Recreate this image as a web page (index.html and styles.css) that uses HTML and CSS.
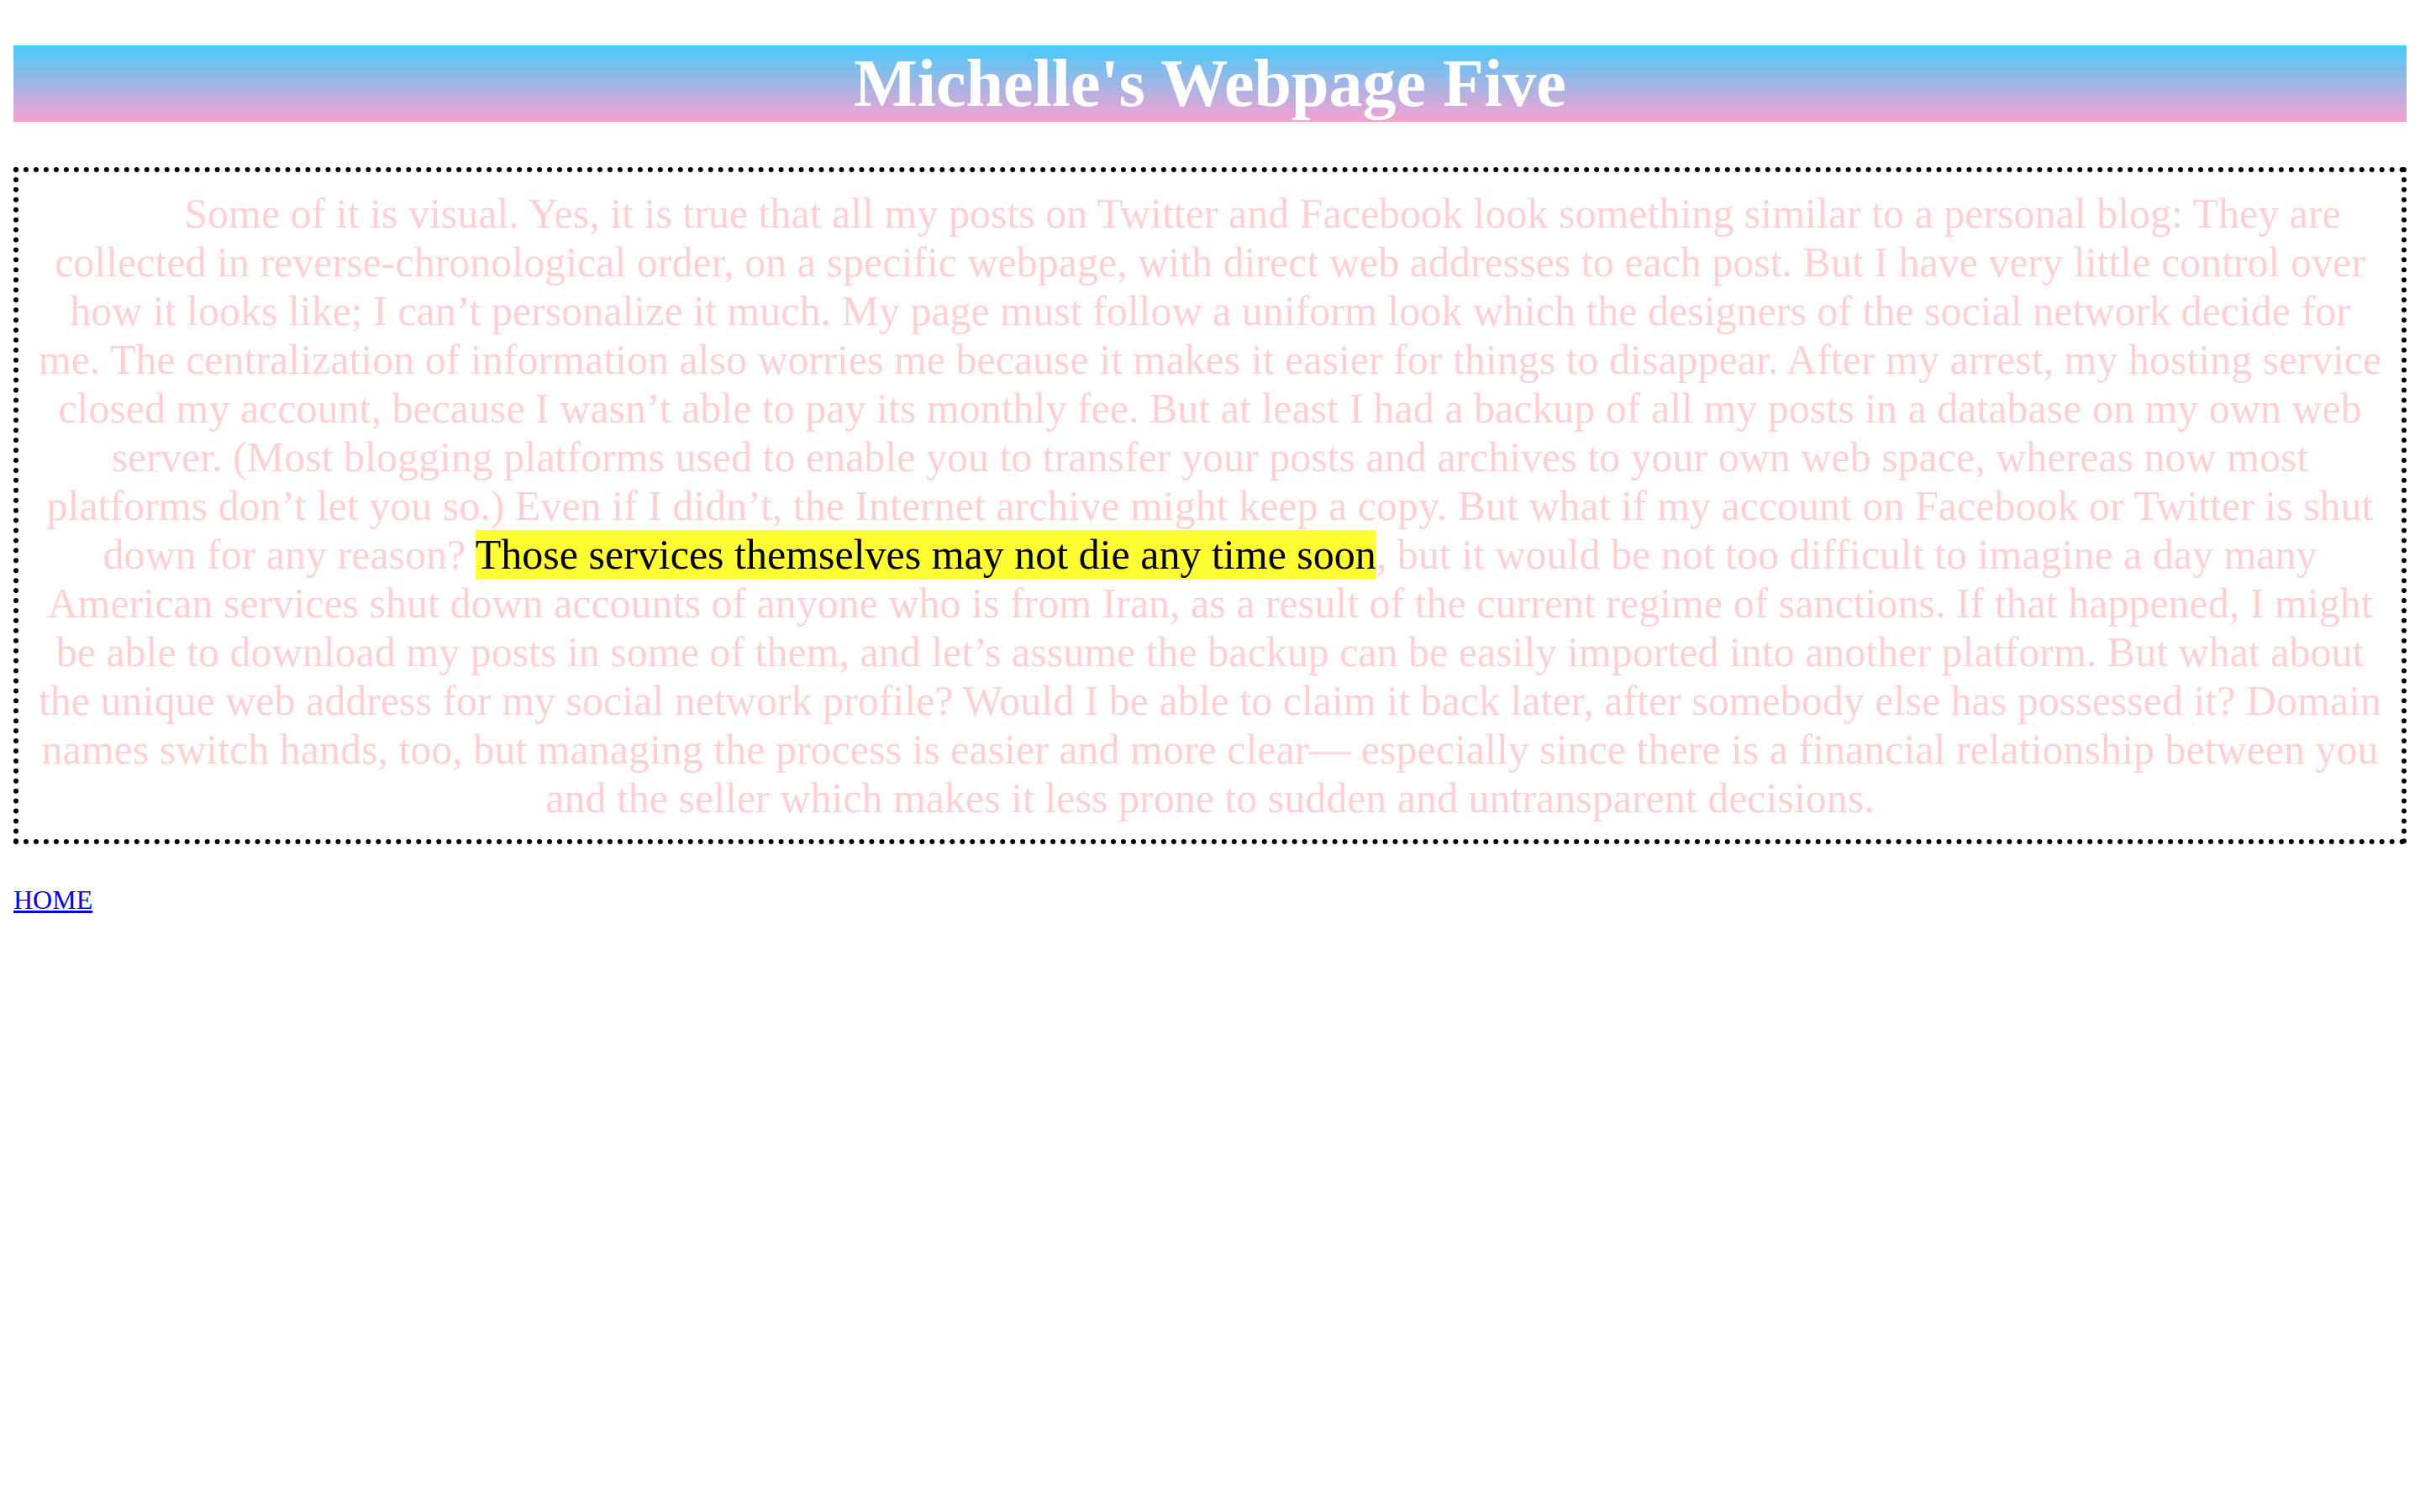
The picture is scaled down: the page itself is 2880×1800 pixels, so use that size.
FILE: index.html
```html
<!DOCTYPE html>
<html>
<head>
<meta charset="utf-8">
<title>Michelle's Webpage Five</title>
<link rel="stylesheet" href="styles.css">
</head>
<body>
<h1 class="title">Michelle's Webpage Five</h1>
<div class="box">
<p class="story">Some of it is visual. Yes, it is true that all my posts on Twitter and Facebook look something similar to a personal blog: They are collected in reverse-chronological order, on a specific webpage, with direct web addresses to each post. But I have very little control over how it looks like; I can’t personalize it much. My page must follow a uniform look which the designers of the social network decide for me. The centralization of information also worries me because it makes it easier for things to disappear. After my arrest, my hosting service closed my account, because I wasn’t able to pay its monthly fee. But at least I had a backup of all my posts in a database on my own web server. (Most blogging platforms used to enable you to transfer your posts and archives to your own web space, whereas now most platforms don’t let you so.) Even if I didn’t, the Internet archive might keep a copy. But what if my account on Facebook or Twitter is shut down for any reason? <span class="mark">Those services themselves may not die any time soon</span>, but it would be not too difficult to imagine a day many American services shut down accounts of anyone who is from Iran, as a result of the current regime of sanctions. If that happened, I might be able to download my posts in some of them, and let’s assume the backup can be easily imported into another platform. But what about the unique web address for my social network profile? Would I be able to claim it back later, after somebody else has possessed it? Domain names switch hands, too, but managing the process is easier and more clear— especially since there is a financial relationship between you and the seller which makes it less prone to sudden and untransparent decisions.</p>
</div>
<p class="nav"><a href="#">HOME</a></p>
</body>
</html>
```
FILE: styles.css
```css
html, body {
  background: #ffffff;
}
body {
  margin: 0;
  padding: 54px 16px 0;
  font-family: "Liberation Serif", "Times New Roman", serif;
  font-size: 32px;
}
.title {
  margin: 0 0 54px;
  background: linear-gradient(to bottom, #47cbfc, #f8a0cf);
  color: #ffffff;
  font-size: 80px;
  font-weight: bold;
  text-align: center;
}
.box {
  border: 6px dotted #000000;
  padding: 20px;
}
.story {
  margin: 0;
  font-size: 50px;
  color: #ffd0d3;
  text-align: center;
  text-indent: 125px;
}
.mark {
  background: #ffff33;
  color: #000000;
  padding: 1px 0 2px;
}
.nav {
  margin: 48px 0 0;
}
.nav a {
  color: #0000ee;
}
```
